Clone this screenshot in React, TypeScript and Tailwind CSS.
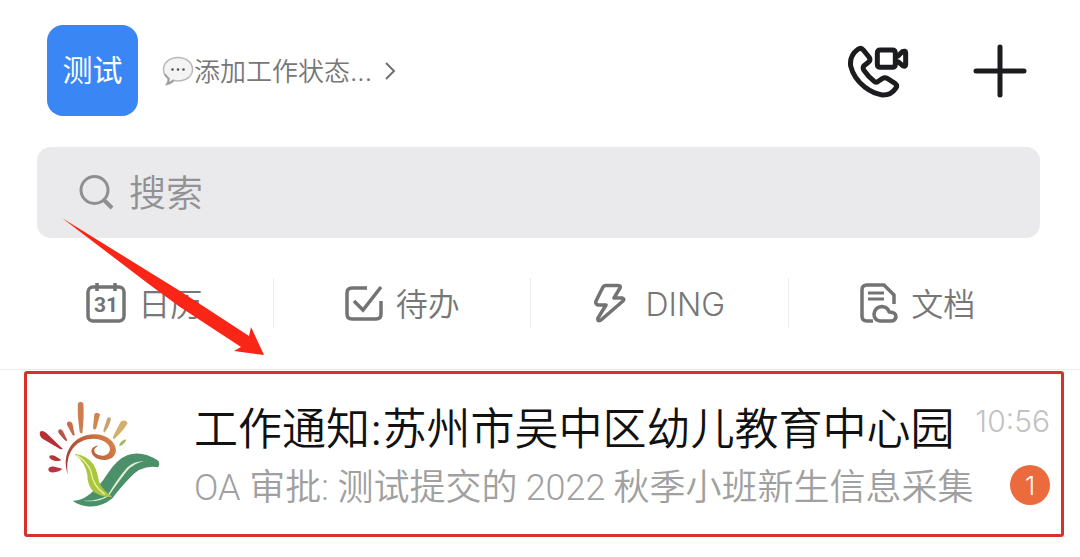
import { useState, type ReactNode } from 'react';

function ChatBubble() {
    return (
        <svg width="32" height="32" viewBox="0 0 32 32" fill="none" aria-hidden="true">
            <path
                d="M16 2.500c8.200 0 14.500 5 14.500 11.800S24.500 26 16 26c-1.500 0-2.800-.1-4-.4-1.800 1.900-4.300 3.600-7.600 3.900 1.200-1.600 1.700-3.600 1.500-5.900C3.100 21.500 1.500 18.300 1.500 14.300 1.500 7.500 7.800 2.500 16 2.500Z"
                fill="#f4f4f4"
                stroke="#b9b9b9"
                strokeWidth="1.500"
            />
            <path d="M3 19c1 2 3 3.500 4 4.500.3 2-.5 4-1.500 5.200 3-.7 4.500-2.200 6-4" stroke="#9a9a9a" strokeWidth="1.500" />
            <circle cx="10.500" cy="14.500" r="1.300" fill="#555" />
            <circle cx="16" cy="14.500" r="1.300" fill="#555" />
            <circle cx="21.500" cy="14.500" r="1.300" fill="#555" />
        </svg>
    );
}

function ChevronIcon() {
    return (
        <svg width="12" height="20" viewBox="0 0 12 20" fill="none" stroke="#707070" strokeWidth="2" aria-hidden="true">
            <path d="M2 2l8 8-8 8" />
        </svg>
    );
}

function CallIcon() {
    return (
        <svg width="62" height="54" viewBox="54 44 186 162" fill="none" stroke="#1c1c1e" strokeWidth="15" strokeLinejoin="round" aria-hidden="true">
            <path d="M87 60Q96 53 103 62L120 83Q126 91 119 98L105 109Q100 115 105 123Q119 144 137 157Q143 161 149 155L161 147Q168 143 176 148L199 163Q206 169 200 177Q186 198 160 197Q133 193 108 174Q74 147 65 110Q61 79 87 60Z" />
            <path d="M154 62H190Q199 62 199 72V104Q199 114 190 114H154Q145 114 145 104V72Q145 62 154 62Z" />
            <path d="M199 78L207 80L220 67Q230 63 230 70V106Q230 113 221 109L207 97L199 99" />
        </svg>
    );
}

function PlusIcon() {
    return (
        <svg width="54" height="54" viewBox="0 0 54 54" stroke="#1c1c1e" strokeWidth="5" strokeLinecap="round" aria-hidden="true">
            <path d="M27 3v48M3 27h48" />
        </svg>
    );
}

function SearchIcon() {
    return (
        <svg width="36" height="36" viewBox="0 0 36 36" fill="none" stroke="#8f8f91" strokeWidth="3" aria-hidden="true">
            <circle cx="15.500" cy="15" r="13.500" />
            <path d="M25 25l8 8" strokeWidth="4" />
        </svg>
    );
}

function CalendarIcon() {
    return (
        <svg width="40" height="40" viewBox="0 0 40 40" fill="none" stroke="#737373" strokeWidth="3.500" aria-hidden="true">
            <rect x="2" y="4" width="36" height="34" rx="5" />
            <path d="M11 0v8M29 0v8" />
            <text x="20" y="29" textAnchor="middle" fill="#737373" stroke="none" className="font-['Roboto',sans-serif] text-[21px] font-bold">31</text>
        </svg>
    );
}

function TodoIcon() {
    return (
        <svg width="40" height="40" viewBox="0 0 40 40" fill="none" stroke="#737373" strokeWidth="3.500" aria-hidden="true">
            <path d="M23 5H8Q3 5 3 10V31Q3 36 8 36H32Q37 36 37 31V18" />
            <path d="M10 18L19 27L37 4" />
        </svg>
    );
}

function DingIcon() {
    return (
        <svg width="32" height="40" viewBox="0 0 32 40" fill="none" stroke="#737373" strokeWidth="3.500" strokeLinejoin="round" aria-hidden="true">
            <path d="M12 2.500H24Q27 2.500 26 5L20 15H28Q31 16 29 18L7 37Q3 39 4 35L12 22H4Q1 21 2 18L9 4Q10 2.500 12 2.500Z" />
        </svg>
    );
}

function DocIcon() {
    return (
        <svg width="40" height="40" viewBox="0 0 40 40" fill="none" stroke="#737373" strokeWidth="3.500" aria-hidden="true">
            <path d="M14 38H8Q3 38 3 33V7Q3 2 8 2H25L35 12V21" />
            <path d="M9 10H25M9 16H25" strokeWidth="3" />
            <path d="M21 38Q15 37 15 31Q16 24 23 23.500Q29 24 30 29Q37 29 37 34Q36 38 32 38Z" strokeLinejoin="round" />
        </svg>
    );
}

function SchoolLogo() {
    return (
        <svg width="122" height="110" viewBox="54 100 366 330" aria-hidden="true">
            <defs>
                <linearGradient id="swirl" x1="135" y1="320" x2="290" y2="220" gradientUnits="userSpaceOnUse">
                    <stop offset="0" stopColor="#a82f32" />
                    <stop offset=".5" stopColor="#bb5f3b" />
                    <stop offset="1" stopColor="#dc8848" />
                </linearGradient>
            </defs>
            <path d="M60 198Q68 192 79 202L128 249Q123 253 115 247L69 220Q56 210 60 198Z" fill="#b52f35" />
            <path d="M115 194Q122 187 129 197L142 224Q140 229 133 222L118 205Q113 199 115 194Z" fill="#b85547" />
            <path d="M141 171Q149 163 157 173L164 207Q162 213 157 207L144 183Q139 176 141 171Z" fill="#c76b4c" />
            <path d="M174 113Q181 104 190 113Q193 154 187 203Q181 205 179 198Q171 145 174 113Z" fill="#cc7e50" />
            <path d="M223 145Q232 137 240 146L229 188Q222 196 219 187Z" fill="#cd8651" />
            <path d="M262 157Q270 151 273 160Q267 185 253 201Q248 198 252 188Z" fill="#c7a374" />
            <path d="M302 168Q316 160 323 172Q315 190 283 220Q276 219 280 211Z" fill="#d2b06c" />
            <path d="M300 233Q309 220 319 222Q316 233 299 242Q296 240 300 233Z" fill="#a5b967" />
            <path d="M88 271Q96 266 109 273L124 283Q119 288 102 285Q87 281 88 271Z" fill="#b33439" />
            <path d="M85 310Q88 300 104 303L127 309Q120 317 103 320Q85 322 85 310Z" fill="#bd3440" />
            <path d="M144 327C124 270 152 222 199 209C246 196 286 222 288 253C287 282 254 290 227 276C207 261 211 240 236 240C220 247 219 258 231 266C249 276 269 268 270 250C269 229 235 214 203 221C158 231 135 272 144 327Z" fill="url(#swirl)" />
            <path d="M158 405Q182 407 211 384Q240 360 262 325Q291 280 323 268Q366 253 415 285Q421 296 414 305Q365 296 329 337Q295 373 278 397Q241 429 196 421Q172 417 158 405Z" fill="#4b9068" />
            <path d="M188 405Q231 408 263 389Q290 342 321 306Q345 285 372 287Q343 291 319 318Q288 358 266 391Q235 412 188 405Z" fill="#e3f0d8" />
            <path d="M163 264Q202 269 220 296Q231 314 237 348Q246 372 277 393Q249 397 222 379Q202 361 202 327Q197 292 163 264Z" fill="#a9c63f" />
            <path d="M170 269Q199 285 212 315Q218 361 254 386" fill="none" stroke="#edf0a6" strokeWidth="4" />
        </svg>
    );
}

const tabs: { label: string; icon: ReactNode; gap: string }[] = [
    { label: '日历', icon: <CalendarIcon />, gap: 'gap-3' },
    { label: '待办', icon: <TodoIcon />, gap: 'gap-3' },
    { label: 'DING', icon: <DingIcon />, gap: 'gap-5' },
    { label: '文档', icon: <DocIcon />, gap: 'gap-3' },
];

export default function App() {
    const [query, setQuery] = useState('');

    return (
        <main className="relative bg-white font-['Inter','Noto_Sans_CJK_SC',sans-serif] font-[350]">
            {/* Header */}
            <header className="flex items-center justify-between pt-[25px] pl-[47px] pr-[53px]">
                <div className="flex items-center gap-6">
                    <div className="w-[91px] h-[91px] rounded-[16px] bg-[#3a86f4] flex items-center justify-center text-[30px] font-normal text-white">
                        测试
                    </div>
                    <button className="flex items-center text-[26px] text-[#777]">
                        <ChatBubble />
                        <span className="mr-3 pt-0.5">添加工作状态...</span>
                        <ChevronIcon />
                    </button>
                </div>
                <div className="flex items-center gap-16">
                    <button aria-label="通话"><CallIcon /></button>
                    <button aria-label="添加"><PlusIcon /></button>
                </div>
            </header>

            {/* Search */}
            <label className="mt-[31px] ml-[37px] mr-10 h-[91px] rounded-[14px] bg-[#eaeaec] flex items-center gap-[14px] pl-[42px] pr-6">
                <SearchIcon />
                <input
                    type="text"
                    aria-label="搜索"
                    placeholder="搜索"
                    value={query}
                    onChange={(e) => setQuery(e.target.value)}
                    className="flex-1 min-w-0 pt-0.5 bg-transparent text-[37px] leading-[50px] text-[#555] placeholder:text-[#929294] outline-none"
                />
            </label>

            {/* Shortcuts */}
            <nav className="mt-10 ml-4 mr-[34px] grid grid-cols-4 divide-x divide-[#ececec]">
                {tabs.map(({ label, icon, gap }) => (
                    <button key={label} className={`h-[50px] flex items-center justify-center text-[32px] text-[#777] ${gap}`}>
                        {icon}
                        <span className="pt-1">{label}</span>
                    </button>
                ))}
            </nav>

            {/* Messages */}
            <section className="mt-[41px] border-t border-[#ebebeb] pt-px px-6 pr-4 pb-5">
                <a href="#notice" className="flex items-center border-[3px] border-[#d9302b] rounded-[3px] px-[11px] h-[166px]">
                    <SchoolLogo />
                    <div className="flex-1 min-w-0 ml-[34px] pt-2">
                        <div className="flex items-start justify-between">
                            <h2 className="text-[44px] leading-[60px] text-[#111] whitespace-nowrap">工作通知:苏州市吴中区幼儿教育中心园</h2>
                            <time className="text-[30px] leading-[44px] text-[#c2c2c2]">10:56</time>
                        </div>
                        <div className="flex items-start justify-between">
                            <p className="font-['Roboto','Noto_Sans_CJK_SC',sans-serif] text-[36px] leading-[58px] text-[#a0a0a0] whitespace-nowrap">
                                OA 审批: 测试提交的<span className="mx-2">2022</span>秋季小班新生信息采集
                            </p>
                            <span className="mt-1.5 w-10 h-10 rounded-full bg-[#ec6b3c] flex items-center justify-center text-[26px] text-white">1</span>
                        </div>
                    </div>
                </a>
            </section>

            {/* Pointer arrow */}
            <svg className="absolute left-[60px] top-[216px] pointer-events-none" width="208" height="142" viewBox="60 216 208 142" aria-hidden="true">
                <path d="M62 218L180 291L249 336L251 327L264 355L234 351L241 347L180 307L150 285Z" fill="#f92517" />
            </svg>
        </main>
    );
}
